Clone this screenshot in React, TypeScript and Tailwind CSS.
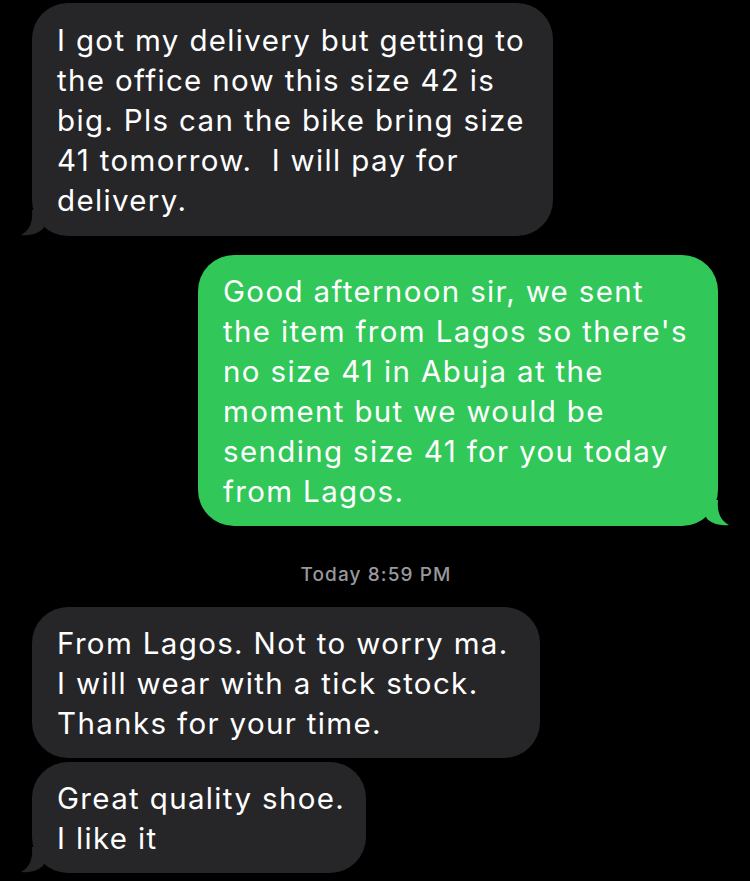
const font = { fontFamily: "Inter, 'Noto Sans', sans-serif" };

function Tail({ side, color }: { side: "left" | "right"; color: string }) {
  if (side === "left") {
    return (
      <svg className="absolute -left-[11px] bottom-0" width="30" height="26" viewBox="0 0 30 26">
        <path d="M11 0 C12 12 9 20 0 25 C9 26 16 24 22 19 L30 0 Z" fill={color} />
      </svg>
    );
  }
  return (
    <svg className="absolute -right-[11px] bottom-0" width="30" height="26" viewBox="0 0 30 26">
      <path d="M19 0 C18 12 21 20 30 25 C21 26 14 24 8 19 L0 0 Z" fill={color} />
    </svg>
  );
}

function Bubble({
  lines,
  out,
  tail,
  width,
  pad = "pt-[16px] pb-[15px]",
}: {
  lines: string[];
  out?: boolean;
  tail?: boolean;
  width: string;
  pad?: string;
}) {
  const color = out ? "#31c859" : "#262629";
  return (
    <div
      className={`relative rounded-[36px] pl-[25px] text-white text-[29.5px] leading-[40px] tracking-[1.35px] ${pad} ${width} ${
        out ? "bg-[#31c859] self-end" : "bg-[#262629] self-start"
      }`}
    >
      {tail && <Tail side={out ? "right" : "left"} color={color} />}
      <div className="relative whitespace-pre">
        {lines.map((l) => (
          <div key={l}>{l}</div>
        ))}
      </div>
    </div>
  );
}

export default function App() {
  return (
    <div className="h-[881px] w-[750px] overflow-hidden bg-black" style={font}>
      <div className="flex flex-col pl-[32px] pr-[32px] pt-[3px]">
        <Bubble
          width="w-[521px]"
          pad="pt-[17px] pb-[16px]"
          tail
          lines={[
            "I got my delivery but getting to",
            "the office now this size 42 is",
            "big. Pls can the bike bring size",
            "41 tomorrow.  I will pay for",
            "delivery.",
          ]}
        />
        <div className="mt-[19px] flex flex-col">
          <Bubble
            out
            tail
            width="w-[520px]"
            lines={[
              "Good afternoon sir, we sent",
              "the item from Lagos so there's",
              "no size 41 in Abuja at the",
              "moment but we would be",
              "sending size 41 for you today",
              "from Lagos.",
            ]}
          />
        </div>
        <div className="mt-[37px] mb-[20px] text-center text-[19px] font-medium leading-[24px] tracking-[1.1px] text-[#98989d] pl-[2px]">
          Today 8:59 PM
        </div>
        <Bubble
          width="w-[508px]"
          lines={["From Lagos. Not to worry ma.", "I will wear with a tick stock.", "Thanks for your time."]}
        />
        <div className="mt-[4px] flex flex-col">
          <Bubble width="w-[334px]" tail lines={["Great quality shoe.", "I like it"]} />
        </div>
      </div>
    </div>
  );
}
